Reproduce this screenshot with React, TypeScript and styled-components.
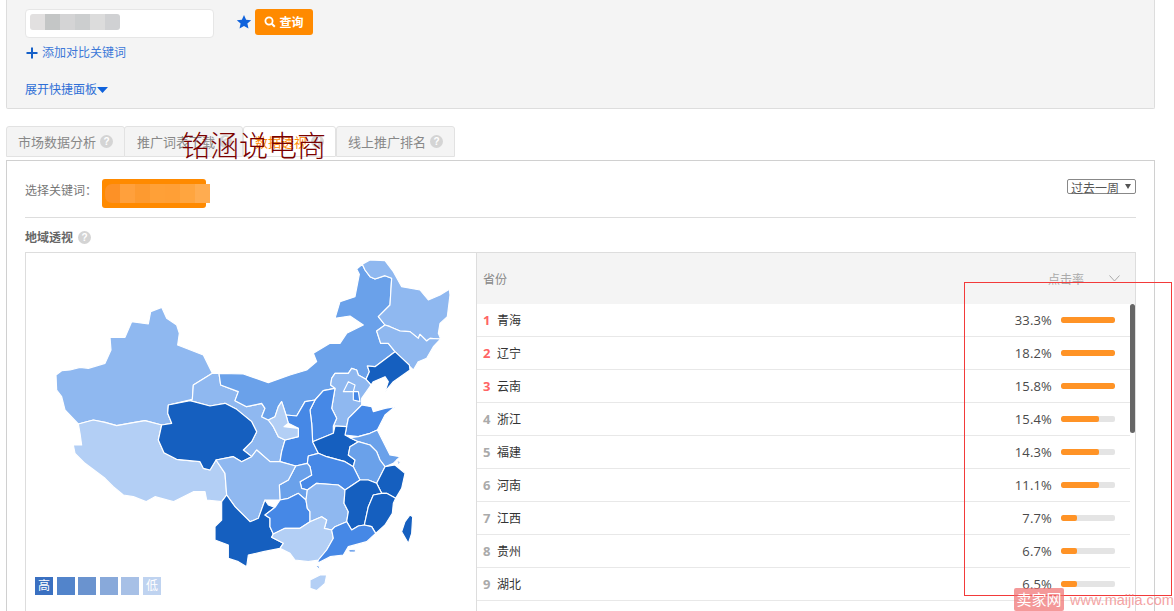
import styled, { createGlobalStyle } from "styled-components";

const BLUE_DARK = "#155fbf";
const BLUE_MID = "#4688e6";
const BLUE_SOFT = "#6aa1ea";
const BLUE_LIGHT = "#8fb8f0";
const BLUE_PALE = "#b3cff5";

// map outlines, in 3x coordinates of the map pane
const provinces: [string, string][] = [
  // xinjiang
  [BLUE_LIGHT, "78,375 95,362 120,360 150,352 175,355 225,340 243,300 240,262 285,262 305,215 355,222 362,185 395,172 410,205 440,225 448,250 443,285 520,315 547,370 490,405 487,448 415,465 413,490 425,520 395,525 345,512 310,518 260,527 225,517 190,510 145,522 105,480 95,440 80,420"],
  // tibet
  [BLUE_PALE, "145,522 190,510 225,517 260,527 310,518 345,512 395,525 385,570 402,608 440,628 510,635 520,655 540,660 558,630 585,670 590,735 575,755 530,750 525,725 490,725 430,755 375,740 348,755 310,740 280,735 250,710 225,685 185,655 165,640 135,610 130,585 155,585 150,550"],
  // gansu
  [BLUE_LIGHT, "487,448 490,405 547,370 567,370 572,405 625,425 615,452 650,470 695,460 705,475 695,500 715,510 730,530 745,560 765,570 755,605 750,635 720,635 680,600 665,620 640,600 665,575 680,545 665,515 620,478 585,460 540,468 480,452"],
  // qinghai
  [BLUE_DARK, "415,465 480,452 540,468 585,460 620,478 665,515 680,545 665,575 640,600 665,620 635,635 610,620 558,630 540,660 520,655 510,635 440,628 402,608 385,570 395,525 425,520 413,490"],
  // inner mongolia
  [BLUE_SOFT, "567,370 640,372 715,398 780,375 830,360 860,335 850,310 900,280 930,280 950,250 1000,225 960,198 915,205 930,155 975,140 988,73 980,57 997,43 1005,60 1020,80 1035,87 1065,77 1085,85 1080,165 1045,200 1065,225 1040,243 1052,280 1075,280 1095,305 1035,350 1012,348 1018,365 1008,388 985,375 980,360 965,355 955,370 915,370 905,385 902,405 915,415 880,422 855,450 825,455 800,498 768,495 755,455 745,470 735,500 715,510 695,500 705,475 695,460 650,470 615,452 625,425 572,405"],
  // heilongjiang
  [BLUE_LIGHT, "997,43 1020,30 1065,32 1090,65 1115,110 1170,120 1195,150 1230,135 1258,118 1260,135 1252,200 1230,220 1225,250 1232,267 1200,265 1190,273 1170,253 1165,265 1140,245 1110,243 1080,230 1065,225 1045,200 1080,165 1085,85 1065,77 1035,87 1020,80 1005,60"],
  // jilin
  [BLUE_LIGHT, "1065,225 1080,230 1110,243 1140,245 1165,265 1170,253 1190,273 1200,265 1232,267 1210,290 1190,325 1165,335 1150,360 1140,350 1095,305 1075,280 1052,280 1040,243"],
  // liaoning
  [BLUE_DARK, "1095,305 1138,345 1140,360 1090,395 1065,425 1075,395 1065,380 1030,395 1023,405 1008,388 1018,365 1012,348 1035,350"],
  // hebei
  [BLUE_LIGHT, "905,385 915,370 955,370 965,355 980,360 985,375 1008,388 1023,405 995,445 995,465 955,505 950,530 915,528 910,528 920,505 905,475 915,415 902,405"],
  // beijing
  [BLUE_LIGHT, "940,425 955,395 975,405 970,425"],
  // tianjin
  [BLUE_MID, "970,425 985,425 990,455 970,450"],
  // shanxi
  [BLUE_MID, "855,450 880,422 915,415 905,475 920,505 910,528 910,550 848,575 845,520 840,480"],
  // shaanxi
  [BLUE_MID, "825,455 855,450 840,480 845,520 848,575 865,610 835,618 832,640 797,648 750,635 755,605 765,570 805,560 805,535 775,520 768,495 800,498"],
  // ningxia
  [BLUE_PALE, "715,510 735,500 745,470 755,455 768,495 775,520 762,530 805,535 805,560 765,570 745,560 730,530"],
  // shandong
  [BLUE_MID, "950,530 955,505 995,465 1025,470 1030,485 1065,475 1095,470 1065,495 1042,540 1020,550 985,560 945,555"],
  // henan
  [BLUE_DARK, "848,575 910,550 915,528 950,530 945,555 960,563 985,575 960,590 955,615 975,630 970,650 945,635 890,620 865,610"],
  // jiangsu
  [BLUE_SOFT, "985,560 1020,550 1042,540 1080,615 1110,620 1090,640 1065,650 1050,630 1040,605 1020,585 985,575 960,563"],
  // anhui
  [BLUE_SOFT, "960,590 985,575 1020,585 1040,605 1050,630 1065,650 1040,700 1015,690 990,690 970,650 975,630 955,615"],
  // shanghai
  [BLUE_PALE, "1100,630 1112,635 1105,648"],
  // zhejiang
  [BLUE_DARK, "1065,650 1095,645 1125,670 1115,715 1097,745 1070,730 1055,730 1040,700"],
  // hubei
  [BLUE_MID, "835,618 865,610 890,620 945,635 970,650 990,690 945,720 925,705 860,700 832,720 815,715 810,695 845,675 840,650 832,640"],
  // chongqing
  [BLUE_SOFT, "797,648 832,640 840,650 845,675 810,695 815,715 832,720 828,750 805,730 775,745 750,750 748,705 775,690"],
  // sichuan
  [BLUE_LIGHT, "558,630 610,620 635,635 665,620 680,600 720,635 750,635 797,648 775,690 748,705 750,750 705,750 685,805 660,815 615,770 590,735 585,670"],
  // yunnan
  [BLUE_DARK, "575,755 590,735 615,770 660,815 685,805 705,750 715,765 735,772 705,795 720,805 720,830 730,852 725,862 760,880 750,895 700,905 655,915 650,950 625,935 595,925 595,885 555,870 555,830 575,810"],
  // guizhou
  [BLUE_MID, "705,795 735,772 750,750 775,745 805,730 828,750 832,775 840,785 840,815 810,835 765,835 730,852 720,830 720,805"],
  // hunan
  [BLUE_LIGHT, "832,720 860,700 925,705 945,720 942,760 955,785 950,815 915,830 905,840 883,835 890,810 875,800 840,815 840,785 832,775 828,750"],
  // jiangxi
  [BLUE_DARK, "945,720 990,690 1015,690 1040,700 1055,730 1030,735 1015,770 1003,825 985,828 965,840 950,815 955,785 942,760"],
  // fujian
  [BLUE_DARK, "1055,730 1070,730 1097,745 1090,760 1087,790 1065,825 1037,850 1025,830 1003,825 1015,770 1030,735"],
  // guangxi
  [BLUE_PALE, "730,852 765,835 810,835 840,815 875,800 890,810 883,835 905,840 910,865 890,900 865,930 835,935 795,930 780,910 750,895 760,880 725,862"],
  // guangdong
  [BLUE_MID, "905,840 915,830 950,815 965,840 985,828 1003,825 1025,830 1037,850 1010,875 955,890 940,915 900,920 862,940 875,965 860,950 865,930 890,900 910,865"],
  [BLUE_MID, "955,898 978,900 975,906 958,906"],
  // hainan
  [BLUE_PALE, "840,990 870,975 890,975 885,1000 860,1022 840,1015"],
  // taiwan
  [BLUE_DARK, "1140,795 1148,800 1145,850 1135,880 1115,845 1125,815"],
];

const legend = [
  { color: "#3a70c1", label: "高" },
  { color: "#5284cb", label: "" },
  { color: "#6a93cf", label: "" },
  { color: "#88a9da", label: "" },
  { color: "#a7c0e6", label: "" },
  { color: "#bfd3f0", label: "低" },
];

const rows = [
  { name: "青海", rate: "33.3%", bar: 54 },
  { name: "辽宁", rate: "18.2%", bar: 54 },
  { name: "云南", rate: "15.8%", bar: 54 },
  { name: "浙江", rate: "15.4%", bar: 38 },
  { name: "福建", rate: "14.3%", bar: 38 },
  { name: "河南", rate: "11.1%", bar: 38 },
  { name: "江西", rate: "7.7%", bar: 16 },
  { name: "贵州", rate: "6.7%", bar: 16 },
  { name: "湖北", rate: "6.5%", bar: 16 },
];

const tabs = [
  { label: "市场数据分析", active: false },
  { label: "推广词表下载", active: false },
  { label: "数据透视", active: true },
  { label: "线上推广排名", active: false },
];

const inputMosaic = ["#e2e0e0", "#c4c6c6", "#d4d4d5", "#cccecf", "#dcdcdc", "#d0d1d3"];
const chipMosaic = ["#fd9126", "#ffa03c", "#fd9a30", "#ffa037", "#ff9f36", "#ffa53f", "#ffac50"];

function Help() {
  return <HelpDot>?</HelpDot>;
}

export default function App() {
  return (
    <Page>
      <GlobalStyle />
      <SearchPanel>
        <SearchRow>
          <KeywordInput>
            <Mosaic>
              {inputMosaic.map((c, i) => (
                <MosaicCell key={i} $color={c} />
              ))}
            </Mosaic>
          </KeywordInput>
          <StarIcon viewBox="0 0 24 24">
            <path d="M12 1.5l3.2 7 7.6.8-5.7 5.1 1.6 7.5L12 18.1l-6.7 3.8 1.6-7.5L1.2 9.3l7.6-.8z" fill="#0f62dc" />
          </StarIcon>
          <QueryButton>
            <svg width="12" height="12" viewBox="0 0 12 12">
              <circle cx="5" cy="5" r="3.6" fill="none" stroke="#fff" strokeWidth="1.8" />
              <path d="M7.8 7.8l3 3" stroke="#fff" strokeWidth="2" />
            </svg>
            查询
          </QueryButton>
        </SearchRow>
        <AddLink>
          <svg width="12" height="12" viewBox="0 0 12 12">
            <path d="M6 0.5v11M0.5 6h11" stroke="#1560c8" strokeWidth="2" />
          </svg>
          添加对比关键词
        </AddLink>
        <ExpandLink>
          展开快捷面板
          <svg width="11" height="6" viewBox="0 0 11 6">
            <path d="M0 0h11L5.5 6z" fill="#0f62dc" />
          </svg>
        </ExpandLink>
      </SearchPanel>

      <TabBar>
        {tabs.map((t) => (
          <Tab key={t.label} $active={t.active}>
            {t.label}
            <Help />
          </Tab>
        ))}
      </TabBar>

      <ContentPanel>
        <KeywordBar>
          <KeywordLabel>选择关键词：</KeywordLabel>
          <KeywordChip>
            <ChipMosaic>
              {chipMosaic.map((c, i) => (
                <MosaicCell key={i} $color={c} />
              ))}
            </ChipMosaic>
          </KeywordChip>
          <PeriodSelect>
            过去一周
            <svg width="6" height="5" viewBox="0 0 6 5">
              <path d="M0 0h6L3 5z" fill="#555" />
            </svg>
          </PeriodSelect>
        </KeywordBar>

        <SectionTitle>
          地域透视
          <Help />
        </SectionTitle>

        <GeoBox>
          <MapPane>
            <svg width="450" height="361" viewBox="0 0 1350 1083">
              {provinces.map(([fill, points], i) => (
                <polygon key={i} points={points} fill={fill} stroke="#fff" strokeWidth="3.5" strokeLinejoin="round" />
              ))}
            </svg>
            <Legend>
              {legend.map((l) => (
                <LegendCell key={l.color} $color={l.color}>
                  {l.label}
                </LegendCell>
              ))}
            </Legend>
          </MapPane>

          <TablePane>
            <TableHead>
              省份
              <HeadSort>
                点击率
                <svg width="11" height="7" viewBox="0 0 11 7">
                  <path d="M0.5 0.5l5 5.5 5-5.5" fill="none" stroke="#aaa" />
                </svg>
              </HeadSort>
            </TableHead>
            <TableBody>
              {rows.map((r, i) => (
                <Row key={r.name}>
                  <Rank $top={i < 3}>{i + 1}</Rank>
                  <Province>{r.name}</Province>
                  <Rate>{r.rate}</Rate>
                  <BarTrack>
                    <BarFill style={{ width: r.bar }} />
                  </BarTrack>
                </Row>
              ))}
              <ScrollThumb />
            </TableBody>
          </TablePane>
        </GeoBox>
      </ContentPanel>

      <StampTitle>铭涵说电商</StampTitle>
      <RedFrame />
      <SiteMark>
        <SiteChip>卖家网</SiteChip>
        <SiteUrl>www.maijia.com</SiteUrl>
      </SiteMark>
    </Page>
  );
}

const GlobalStyle = createGlobalStyle`
  html, body {
    margin: 0;
    height: 100%;
    overflow: hidden;
    background: #fff;
  }
  * {
    box-sizing: border-box;
  }
  body {
    font-family: "Open Sans", "Noto Sans CJK SC", sans-serif;
    font-size: 12px;
    color: #666;
  }
`;

const Page = styled.div`
  position: relative;
  width: 1174px;
  height: 611px;
  padding: 0 19px 0 6px;
  overflow: hidden;
`;

const SearchPanel = styled.div`
  height: 109px;
  background: #f4f4f4;
  border: 1px solid #ddd;
  border-top: none;
  border-radius: 0 0 2px 2px;
  padding: 9px 18px 0;
`;

const SearchRow = styled.div`
  display: flex;
  align-items: flex-start;
`;

const KeywordInput = styled.div`
  width: 189px;
  height: 29px;
  background: #fff;
  border: 1px solid #e6e6e6;
  border-radius: 4px;
  padding: 4px 0 0 4px;
`;

const Mosaic = styled.div`
  display: flex;
  width: 90px;
  height: 16px;
  border-radius: 3px;
  overflow: hidden;
`;

const MosaicCell = styled.div<{ $color: string }>`
  flex: 1;
  background: ${(p) => p.$color};
`;

const StarIcon = styled.svg`
  width: 16px;
  height: 16px;
  margin: 5px 0 0 22px;
`;

const QueryButton = styled.button`
  display: flex;
  align-items: center;
  justify-content: center;
  gap: 3px;
  width: 58px;
  height: 26px;
  margin-left: 3px;
  padding: 0;
  border: none;
  border-radius: 3px;
  background: #ff8a00;
  color: #fff;
  font: bold 12px "Open Sans", "Noto Sans CJK SC", sans-serif;
`;

const AddLink = styled.div`
  display: flex;
  align-items: center;
  gap: 4px;
  height: 18px;
  margin: 6px 0 0 1px;
  color: #3c78d8;
  line-height: 18px;
`;

const ExpandLink = styled.div`
  display: flex;
  align-items: center;
  height: 18px;
  margin-top: 19px;
  color: #2f6fd6;
  line-height: 18px;
`;

const TabBar = styled.div`
  display: flex;
  height: 31px;
  margin-top: 17px;
`;

const Tab = styled.div<{ $active: boolean }>`
  display: flex;
  align-items: center;
  gap: 4px;
  padding: 0 11px;
  border: 1px solid #e2e2e2;
  border-radius: 3px 3px 0 0;
  background: ${(p) => (p.$active ? "#fff" : "#f4f4f4")};
  color: ${(p) => (p.$active ? "#ff8a00" : "#888")};
  font-size: 13px;

  &:nth-child(2) {
    margin-left: -1px;
    padding: 0 10px 0 12px;
  }
`;

const HelpDot = styled.span`
  display: inline-flex;
  align-items: center;
  justify-content: center;
  width: 13px;
  height: 13px;
  border-radius: 50%;
  background: #d4d4d4;
  color: #fff;
  font: bold 10px "Liberation Sans", sans-serif;
`;

const ContentPanel = styled.div`
  height: 460px;
  margin-top: 3px;
  border: 1px solid #d0d0d0;
  border-bottom: none;
  padding: 0 18px;
`;

const KeywordBar = styled.div`
  display: flex;
  align-items: flex-start;
  height: 57px;
  padding-top: 18px;
  border-bottom: 1px solid #ddd;
`;

const KeywordLabel = styled.div`
  width: 77px;
  line-height: 24px;
  color: #777;
`;

const KeywordChip = styled.div`
  position: relative;
  width: 104px;
  height: 29px;
  background: #ff8a00;
  border-radius: 3px;
`;

const ChipMosaic = styled.div`
  position: absolute;
  top: 5px;
  left: 3px;
  display: flex;
  width: 105px;
  height: 19px;
  border-radius: 7px 0 0 7px;
  overflow: hidden;
`;

const PeriodSelect = styled.div`
  display: flex;
  align-items: center;
  gap: 6px;
  width: 69px;
  height: 15px;
  margin-left: auto;
  padding: 3px 0 0 3px;
  border: 1px solid #888;
  border-radius: 2px;
  color: #555;
  line-height: 13px;

  svg {
    margin-top: -3px;
  }
`;

const SectionTitle = styled.div`
  display: flex;
  align-items: center;
  gap: 5px;
  height: 18px;
  margin-top: 10px;
  color: #666;
  font-weight: bold;
`;

const GeoBox = styled.div`
  display: flex;
  margin-top: 6px;
  height: 400px;
  border: 1px solid #ddd;
  border-bottom: none;
`;

const MapPane = styled.div`
  position: relative;
  width: 451px;
  border-right: 1px solid #ddd;
  padding-left: 4px;

  svg {
    display: block;
    margin-top: -3px;
  }
`;

const Legend = styled.div`
  position: absolute;
  left: 9px;
  top: 324px;
  display: flex;
  gap: 3.6px;
`;

const LegendCell = styled.div<{ $color: string }>`
  width: 18px;
  height: 18px;
  background: ${(p) => p.$color};
  color: #fff;
  font-size: 12px;
  line-height: 18px;
  text-align: center;
`;

const TablePane = styled.div`
  flex: 1;
  min-width: 0;
`;

const TableHead = styled.div`
  display: flex;
  align-items: center;
  justify-content: space-between;
  height: 51px;
  padding: 0 15px 0 6px;
  background: #f4f4f4;
  color: #888;
`;

const HeadSort = styled.div`
  display: flex;
  align-items: center;
  gap: 25px;
  color: #aaa;
`;

const TableBody = styled.div`
  position: relative;
  padding-right: 5px;
`;

const Row = styled.div`
  display: flex;
  align-items: center;
  height: 33px;
  padding: 0 15px 0 6px;
  border-bottom: 1px solid #e8e8e8;
`;

const Rank = styled.span<{ $top: boolean }>`
  width: 14px;
  color: ${(p) => (p.$top ? "#ff6464" : "#aaa")};
  font-size: 13px;
  font-weight: bold;
`;

const Province = styled.span`
  color: #333;
`;

const Rate = styled.span`
  margin-left: auto;
  margin-right: 9px;
  color: #4a4a4a;
  font-size: 13px;
  letter-spacing: 0.15px;
`;

const BarTrack = styled.div`
  width: 54px;
  height: 6px;
  border-radius: 2px;
  background: #e4e4e4;
  overflow: hidden;
`;

const BarFill = styled.div`
  height: 100%;
  border-radius: 2px;
  background: #ff9326;
`;

const ScrollThumb = styled.div`
  position: absolute;
  top: 0;
  right: 0;
  width: 5px;
  height: 129px;
  border-radius: 3px;
  background: #666;
`;

const StampTitle = styled.div`
  position: absolute;
  left: 181px;
  top: 126px;
  color: #7a0000;
  font-size: 29px;
  font-weight: 300;
  line-height: 40px;
  white-space: nowrap;
`;

const RedFrame = styled.div`
  position: absolute;
  left: 964px;
  top: 282px;
  width: 208px;
  height: 314px;
  border: 1px solid #f23a3a;
`;

const SiteMark = styled.div`
  position: absolute;
  left: 1014px;
  top: 588px;
  display: flex;
  align-items: center;
  gap: 6px;
`;

const SiteChip = styled.div`
  width: 50px;
  height: 23px;
  border-radius: 2px;
  background: rgba(240, 110, 110, 0.7);
  color: #fff;
  font-size: 15px;
  line-height: 23px;
  text-align: center;
`;

const SiteUrl = styled.div`
  color: #f4a3a3;
  font: 14.5px "Liberation Sans", sans-serif;
  white-space: nowrap;
`;
